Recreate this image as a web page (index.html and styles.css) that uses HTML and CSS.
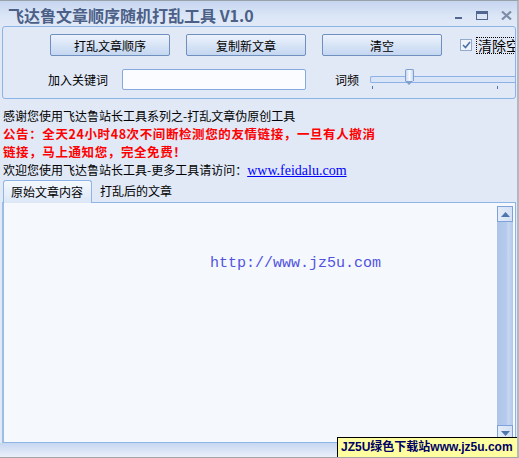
FILE: index.html
```html
<!DOCTYPE html>
<html lang="zh-CN">
<head>
    <meta charset="UTF-8">
    <title>飞达鲁文章顺序随机打乱工具 V1.0</title>
    <link rel="stylesheet" href="styles.css">
</head>
<body>

<div class="window">
    <!-- title bar -->
    <div class="titlebar">
        <span class="title">飞达鲁文章顺序随机打乱工具 V1.0</span>
        <div class="controls">
            <svg width="9" height="9" viewBox="0 0 9 9"><rect x="1" y="6" width="7" height="2" fill="#52678f"/></svg>
            <svg width="12" height="9" viewBox="0 0 12 9"><rect x="0.5" y="0.5" width="11" height="8" fill="none" stroke="#52678f"/><rect x="1" y="1" width="10" height="2" fill="#52678f"/></svg>
            <svg width="11" height="9" viewBox="0 0 11 9"><path d="M1 0.5 L10 8.5 M10 0.5 L1 8.5" stroke="#7d8ca8" stroke-width="2.2"/></svg>
        </div>
    </div>

    <!-- options panel -->
    <div class="panel">
        <div class="btn-row">
            <button class="btn">打乱文章顺序</button>
            <button class="btn">复制新文章</button>
            <button class="btn">清空</button>
            <label class="check">
                <span class="box">
                    <svg width="9" height="8" viewBox="0 0 9 8"><path d="M1 4 L3.5 6.5 L8 1" fill="none" stroke="#4a6fa5" stroke-width="1.6"/></svg>
                </span>
                <span class="check-text">清除空格</span>
            </label>
        </div>
        <div class="key-row">
            <span class="key-label">加入关键词</span>
            <input type="text" class="key-input">
            <span class="freq-label">词频</span>
            <div class="slider">
                <div class="track"></div>
                <div class="thumb"></div>
                <span class="tick tick-a"></span>
                <span class="tick tick-b"></span>
            </div>
        </div>
    </div>

    <!-- info text -->
    <div class="info">
        <p class="line">感谢您使用飞达鲁站长工具系列之-打乱文章伪原创工具</p>
        <p class="notice">公告：全天24小时48次不间断检测您的友情链接，一旦有人撤消</p>
        <p class="notice">链接，马上通知您，完全免费！</p>
        <p class="line">欢迎您使用飞达鲁站长工具-更多工具请访问：<a href="#" class="site">www.feidalu.com</a></p>
    </div>

    <!-- tabs -->
    <div class="tabs">
        <div class="tab active">原始文章内容</div>
        <div class="tab">打乱后的文章</div>
    </div>

    <div class="editor">
        <div class="content">
            <span class="mark">http://www.jz5u.com</span>
        </div>
        <div class="scrollbar">
            <div class="arrow">
                <svg width="9" height="5" viewBox="0 0 9 5"><path d="M4.5 0 L9 5 L0 5 Z" fill="#4f75ad"/></svg>
            </div>
            <div class="rail"></div>
            <div class="arrow">
                <svg width="9" height="5" viewBox="0 0 9 5"><path d="M0 0 L9 0 L4.5 5 Z" fill="#4f75ad"/></svg>
            </div>
        </div>
    </div>

    <div class="statusbar"></div>

    <div class="stamp">JZ5U绿色下载站www.jz5u.com</div>
</div>

</body>
</html>
```

FILE: styles.css
```css
body {
    margin: 0;
    font-family: "Noto Sans CJK SC", "Liberation Sans", sans-serif;
    font-size: 12px;
    color: #000;
}

.window {
    position: relative;
    width: 519px;
    height: 458px;
    box-sizing: border-box;
    background: #e1e9f7;
    border-top: 1px solid #9aa0aa;
    border-right: 2px solid #b4b8be;
    border-bottom: 1px solid #a4a4a4;
    overflow: hidden;
}

.titlebar {
    height: 25px;
    display: flex;
    justify-content: space-between;
    align-items: flex-start;
    background: linear-gradient(#c6d6f0, #dbe6f6 60%, #e1e9f7);
}

.title {
    margin: 4px 0 0 8px;
    font-size: 16px;
    font-weight: bold;
    line-height: 20px;
    color: #4b5f87;
}

.controls {
    display: flex;
    gap: 13px;
    margin: 10px 5px 0 0;
}

.panel {
    margin-left: 2px;
    width: 514px;
    height: 73px;
    box-sizing: border-box;
    border: 1px solid #8db2e8;
    border-radius: 3px;
    overflow: hidden;
}

.btn-row {
    display: flex;
    align-items: center;
    gap: 16px;
    padding: 7px 0 0 47px;
}

.btn {
    flex-shrink: 0;
    width: 120px;
    height: 22px;
    padding: 0;
    font-family: inherit;
    font-size: 12px;
    color: #000;
    border: 1px solid #6f8fbf;
    border-radius: 2px;
    background: linear-gradient(#edf3fc, #d6e3f6 55%, #c4d6f0);
}

.check {
    display: flex;
    flex-shrink: 0;
    align-items: center;
    margin-left: 2px;
    white-space: nowrap;
}

.box {
    width: 10px;
    height: 10px;
    border: 1px solid #93aacd;
    background: #eef3fa;
    display: flex;
    align-items: center;
    justify-content: center;
}

.check-text {
    margin-left: 4px;
    padding: 0 1px;
    font-size: 14px;
    line-height: 15px;
    border: 1px dotted #000;
}

.key-row {
    display: flex;
    align-items: center;
    margin-top: 12px;
    padding-left: 45px;
}

.key-label {
    width: 74px;
}

.key-input {
    width: 184px;
    height: 21px;
    box-sizing: border-box;
    border: 1px solid #86a9dd;
    border-radius: 2px;
    background: #fafcff;
}

.freq-label {
    margin-left: 29px;
    width: 35px;
}

.slider {
    position: relative;
    flex: 1;
    height: 22px;
}

.track {
    margin-top: 8px;
    height: 5px;
    border: 1px solid #8db2e8;
    border-right: none;
    border-radius: 2px 0 0 2px;
    background: #d9e5f6;
}

.thumb {
    position: absolute;
    left: 35px;
    top: 1px;
    width: 7px;
    height: 11px;
    border: 1px solid #7e9fd0;
    border-bottom: none;
    border-radius: 2px 2px 0 0;
    background: linear-gradient(90deg, #c9d9f2, #f6f9fe 50%, #c9d9f2);
}

.thumb::after {
    content: "";
    position: absolute;
    left: -1px;
    top: 11px;
    border-left: 4.5px solid transparent;
    border-right: 4.5px solid transparent;
    border-top: 4px solid #7e9fd0;
}

.tick {
    position: absolute;
    top: 18px;
    width: 1px;
    height: 3px;
    background: #4f75ad;
}

.tick-a { left: 2px; }
.tick-b { left: 127px; }

.info {
    padding: 8px 0 0 3px;
}

.info p {
    margin: 0;
    line-height: 17px;
}

.info .notice {
    color: #ff0000;
    font-size: 12.5px;
    font-weight: bold;
    letter-spacing: 0.6px;
    line-height: 18px;
}

.info .line + .notice {
    margin-top: 1px;
}

.site {
    font-family: "Liberation Serif", serif;
    font-size: 14px;
    color: #0000ff;
}

.tabs {
    display: flex;
    margin-top: 1px;
    height: 22px;
    padding-left: 3px;
}

.tab {
    height: 22px;
    line-height: 22px;
    padding: 0 8px;
    box-sizing: border-box;
    white-space: nowrap;
}

.active {
    width: 89px;
    padding: 0 7px;
    border: 1px solid #8fb4e6;
    border-bottom: none;
    border-radius: 3px 3px 0 0;
    background: linear-gradient(#f4f8fe, #dce7f6);
    position: relative;
    z-index: 1;
    height: 23px;
}

.editor {
    display: flex;
    margin-left: 2px;
    width: 514px;
    height: 241px;
    box-sizing: border-box;
    border: 1px solid #8fb4e6;
    border-left: 2px solid #9dbbe6;
    background: #f5f9fe;
}

.content {
    flex: 1;
    padding: 50px 0 0 206px;
}

.mark {
    font-family: "Liberation Mono", monospace;
    font-size: 15px;
    color: #5153e0;
}

.scrollbar {
    display: flex;
    flex-direction: column;
    width: 16px;
    margin: 3px 2px 1px 0;
}

.arrow {
    height: 16px;
    box-sizing: border-box;
    border: 1px solid #7fa3d8;
    background: linear-gradient(90deg, #e4ecf9, #d4e1f4);
    display: flex;
    align-items: center;
    justify-content: center;
}

.rail {
    flex: 1;
    background: linear-gradient(90deg, #aec5ea, #b6cbed 60%, #c8d8f1 70%, #b0c6ea);
}

.statusbar {
    height: 15px;
    background: linear-gradient(#c6d7f1, #edf2fb);
}

.stamp {
    position: absolute;
    right: -2px;
    bottom: -1px;
    width: 182px;
    height: 21px;
    box-sizing: border-box;
    border: 1px solid #000;
    background: #ffffa0;
    color: #000066;
    font-family: "Liberation Sans", "Noto Sans CJK SC", sans-serif;
    font-size: 12px;
    font-weight: bold;
    line-height: 19px;
    padding-left: 3px;
    white-space: nowrap;
}
```
